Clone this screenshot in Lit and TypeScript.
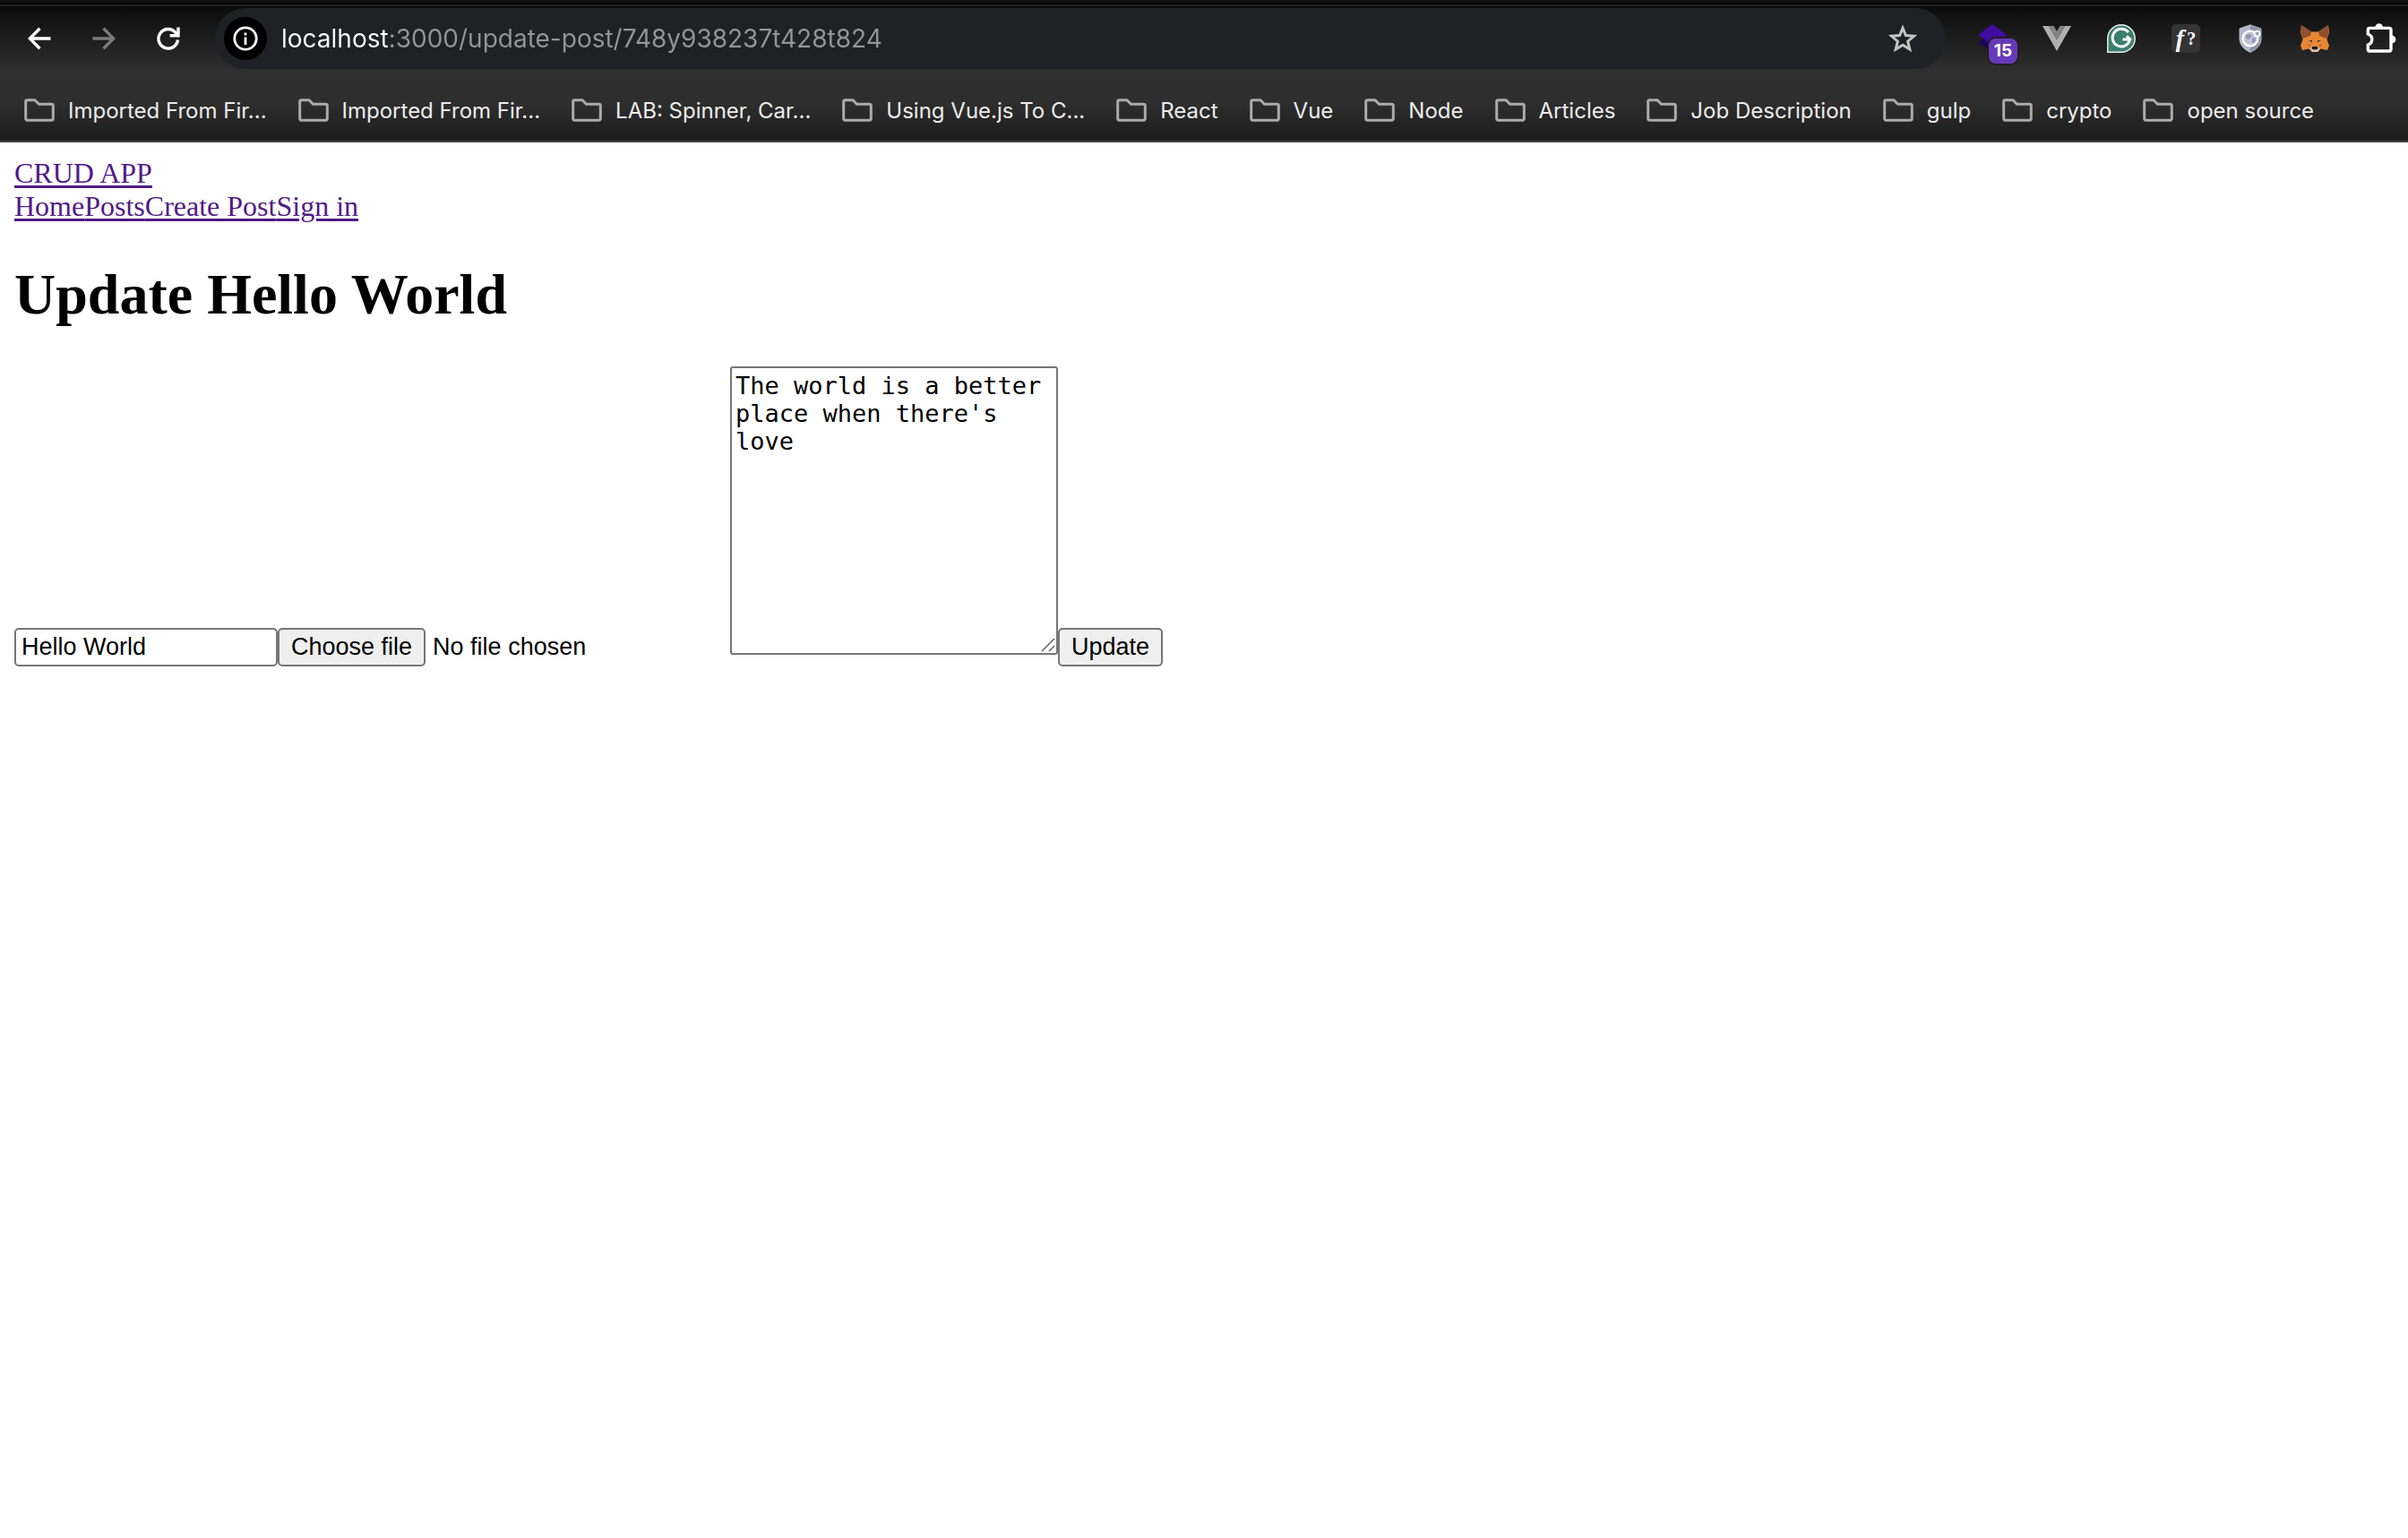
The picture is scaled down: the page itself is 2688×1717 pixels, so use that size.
import { LitElement, html, css } from "lit";
import { customElement, property, state } from "lit/decorators.js";

const BOOKMARKS = [
  "Imported From Fir...",
  "Imported From Fir...",
  "LAB: Spinner, Car...",
  "Using Vue.js To C...",
  "React",
  "Vue",
  "Node",
  "Articles",
  "Job Description",
  "gulp",
  "crypto",
  "open source",
];

const backIcon = html`<svg width="26" height="26" viewBox="0 0 26 26" fill="none" stroke="currentColor" stroke-width="3.4">
  <path d="M25.5 13H3M13.5 1.8L2.3 13l11.2 11.2" />
</svg>`;

const forwardIcon = html`<svg width="26" height="26" viewBox="0 0 26 26" fill="none" stroke="currentColor" stroke-width="3.4">
  <path d="M0.5 13H23M12.5 1.8L23.7 13 12.5 24.2" />
</svg>`;

const reloadIcon = html`<svg width="26" height="26" viewBox="0 0 26 26" fill="none" stroke="currentColor" stroke-width="3.4">
  <path d="M23.5 14.5A10.8 10.8 0 1 1 20.6 5.8L23.6 9" />
  <path d="M24 0.5V9.8H14.6" />
</svg>`;

const infoIcon = html`<svg width="28" height="28" viewBox="0 0 28 28" fill="none" stroke="#fff">
  <circle cx="14" cy="14" r="12.2" stroke-width="2.8" />
  <path d="M14 12.5V21M14 7.5v3" stroke-width="2.8" />
</svg>`;

const starIcon = html`<svg width="34" height="32" viewBox="0 0 34 32" fill="none" stroke="#c4c4c4" stroke-width="3">
  <path d="M17 4.2L20.4 12.6 29.5 13.3 22.6 19.2 24.8 28 17 23.2 9.2 28 11.4 19.2 4.5 13.3 13.6 12.6Z" />
</svg>`;

const folderIcon = html`<svg width="34" height="26" viewBox="0 0 34 26" fill="none" stroke="#ababab" stroke-width="3">
  <path d="M3.5 1.8H12L16.5 6.2H30.5Q32.3 6.2 32.3 8V22.3Q32.3 24.2 30.5 24.2H3.5Q1.7 24.2 1.7 22.3V3.6Q1.7 1.8 3.5 1.8Z" />
</svg>`;

const layersIcon = html`<svg width="32" height="32" viewBox="0 0 32 32">
  <path d="M0 20.5L16 10 32 20.5 16 30Z" fill="#1d0361" />
  <path d="M0 12L16 0 32 12 16 23Z" fill="#3f0ca0" />
</svg>`;

const vueIcon = html`<svg width="32" height="32" viewBox="0 0 32 32">
  <path d="M0 2H7L16 17.5 25 2H32L16 30Z" fill="#b0b0b0" />
  <path d="M7 2H12.5L16 8 19.5 2H25L16 17.5Z" fill="#848484" />
</svg>`;

const grammarIcon = html`<svg width="32" height="32" viewBox="0 0 32 32" fill="none">
  <path d="M0.8 31.2V16A15.2 15.2 0 1 1 16 31.2Z" fill="#3b7f6f" stroke="#e5eeeb" stroke-width="1.5" />
  <path d="M23.8 9.2A9.8 9.8 0 1 0 25.6 17H17.5M22 13.2L25.8 17 23.4 21.5" stroke="#fff" stroke-width="3" />
</svg>`;

const shieldIcon = html`<svg width="32" height="32" viewBox="0 0 32 32" fill="none">
  <path d="M16 0.8L28 5V17Q27.5 26.5 16 31.4 4.5 26.5 4 17V5Z" fill="#8b93a6" stroke="#aab1c2" />
  <path d="M16 0.8L4 5V17Q4.5 26.5 16 31.4Z" fill="#b3b9ca" />
  <circle cx="16" cy="16" r="8.4" fill="#bcc4d6" stroke="#fff" stroke-width="2.4" />
  <path d="M11 12L16 11 17.5 14 14 17 11 16ZM18 16L22 15 21 20 18 21Z" fill="#8c97ad" />
  <circle cx="23.7" cy="10.6" r="3" fill="#9fa8bb" stroke="#fff" stroke-width="1.8" />
</svg>`;

const foxIcon = html`<svg width="32" height="32" viewBox="0 0 32 32">
  <path d="M1 1L12 8.5H20L31 1 32 9 29.5 17 32 24 30 29 22.5 27.5 19 31H13L9.5 27.5 2 29 0 24 2.5 17 0 9Z" fill="#e88735" />
  <path d="M1 1L12 8.5 11 13 2.5 16 1.5 13 0.5 9ZM31 1L20 8.5 21 13 29.5 16 30.5 13 31.5 9Z" fill="#8d512e" />
  <path d="M7 23L12 21.5 10.5 25.5ZM25 23L20 21.5 21.5 25.5Z" fill="#cf6b2e" />
  <path d="M9 18L12.8 18 13.2 20.6ZM23 18L19.2 18 18.8 20.6Z" fill="#343a44" />
  <path d="M10 27L13 25.5H19L22 27 19 31H13Z" fill="#cfc3b6" />
  <path d="M13 25H19L19.3 27.8 16 28.6 12.7 27.8Z" fill="#181818" />
</svg>`;

const puzzleIcon = html`<svg width="36" height="36" viewBox="0 0 36 36" fill="none" stroke="#fff" stroke-width="3.4">
  <path d="M5 6.4H27Q29 6.4 29 8.4V30Q29 32 27 32H5Q3.3 32 3.3 30V25.2A6.4 6.4 0 0 0 3.3 13V8.4Q3.3 6.4 5 6.4Z" />
  <path d="M11.3 5.6a4.4 4.4 0 0 1 8.8 0zM30 14.6a4.4 4.4 0 0 1 0 8.8z" fill="#fff" stroke="none" />
</svg>`;

@customElement("browser-chrome")
class BrowserChrome extends LitElement {
  @property() url = "";

  static styles = css`
    :host {
      display: block;
      font-family: Inter, "Liberation Sans", sans-serif;
      color: #ececec;
      border-bottom: 2px solid #434343;
      background: linear-gradient(
        #121212 0 3px, #000 3px 5px, #222 5px 7px, #0a0a0a 7px,
        #181818 32px, #303030 82px, #2e2e2e 115px, #1c1c1c 157px
      );
    }
    .toolbar {
      display: flex;
      align-items: center;
      padding: 9px 12px 0 24px;
    }
    .nav {
      display: flex;
      gap: 32px;
      margin-right: 32px;
    }
    button {
      border: 0;
      padding: 0;
      background: none;
      color: inherit;
      font: inherit;
      display: flex;
      align-items: center;
      justify-content: center;
    }
    svg {
      display: block;
      flex: none;
    }
    .nav button {
      width: 40px;
      height: 40px;
      color: #fff;
    }
    .nav button:disabled {
      color: #7a7a7a;
    }
    .address {
      flex: 1;
      height: 68px;
      box-sizing: border-box;
      border-radius: 34px;
      background: #202125;
      display: flex;
      align-items: center;
      gap: 16px;
      padding: 0 31px 0 10px;
    }
    .info {
      width: 48px;
      height: 48px;
      border-radius: 24px;
      background: #000;
    }
    .url {
      flex: 1;
      min-width: 0;
      border: 0;
      padding: 0;
      outline: 0;
      height: 40px;
      font: 400 28px/40px Inter, "Liberation Sans", sans-serif;
      color: transparent;
      background: linear-gradient(90deg, #fff 120px, #959597 120px);
      -webkit-background-clip: text;
      background-clip: text;
    }
    .extensions {
      display: flex;
      align-items: center;
      gap: 40px;
      margin-left: 36px;
    }
    .extensions button {
      position: relative;
    }
    .badge {
      position: absolute;
      left: 12px;
      top: 16px;
      width: 32px;
      height: 28px;
      border-radius: 8px;
      background: #673ab7;
      box-shadow: 0 0 0 2px #202020;
      color: #fff;
      font: 700 19px/28px Inter, sans-serif;
      text-align: center;
    }
    .formula {
      width: 32px;
      height: 32px;
      gap: 3px;
      border-radius: 5px;
      background: #343434;
      color: #fff;
      font: italic 700 28px/30px "Liberation Serif", serif;
    }
    .formula .mark {
      font: 700 20px/30px "Liberation Serif", serif;
    }
    .bookmarks {
      display: flex;
      gap: 35px;
      padding: 12px 27px 0;
      overflow: hidden;
    }
    .bookmark {
      height: 68px;
      gap: 15px;
      font-size: 24px;
      font-weight: 400;
      white-space: nowrap;
    }
  `;

  render() {
    return html`
      <div class="toolbar">
        <div class="nav">
          <button aria-label="Back">${backIcon}</button>
          <button aria-label="Forward" disabled>${forwardIcon}</button>
          <button aria-label="Reload">${reloadIcon}</button>
        </div>
        <div class="address">
          <button class="info" aria-label="Site information">${infoIcon}</button>
          <input class="url" type="text" aria-label="Address" spellcheck="false" .value=${this.url} />
          <button aria-label="Bookmark this page">${starIcon}</button>
        </div>
        <div class="extensions">
          <button aria-label="Layers">${layersIcon}<span class="badge">15</span></button>
          <button aria-label="Vue devtools">${vueIcon}</button>
          <button aria-label="Grammar">${grammarIcon}</button>
          <button aria-label="Font finder" class="formula">f<span class="mark">?</span></button>
          <button aria-label="Shield">${shieldIcon}</button>
          <button aria-label="Wallet">${foxIcon}</button>
          <button aria-label="Extensions">${puzzleIcon}</button>
        </div>
      </div>
      <div class="bookmarks">
        ${BOOKMARKS.map((name) => html`<button class="bookmark">${folderIcon}<span>${name}</span></button>`)}
      </div>
    `;
  }
}

@customElement("update-post")
class UpdatePost extends LitElement {
  @state() fileName = "No file chosen";

  static styles = css`
    :host {
      display: block;
      padding: 16px;
      font: 32px/37px "Liberation Serif", serif;
      color: #000;
    }
    a {
      color: #501b87;
      text-decoration: underline;
      text-decoration-thickness: 3px;
      text-underline-offset: 3px;
    }
    .links {
      display: flex;
    }
    h1 {
      margin: 43px 0;
      font-size: 64px;
      line-height: 74px;
      font-weight: 700;
    }
    form {
      display: flex;
      align-items: flex-end;
      font: 27px/31px "Liberation Sans", sans-serif;
    }
    .title,
    .button,
    textarea {
      box-sizing: border-box;
      border: 2px solid #767676;
      border-radius: 5px;
      color: #000;
      font: inherit;
      margin: 0;
    }
    .title {
      width: 294px;
      height: 43px;
      padding: 2px 6px;
      background: #fff;
    }
    .button {
      height: 43px;
      padding: 4px 13px;
      background: #efefef;
      white-space: nowrap;
    }
    .file {
      position: relative;
      display: flex;
      align-items: center;
      gap: 8px;
      width: 505px;
    }
    .file input {
      position: absolute;
      inset: 0;
      width: 100%;
      opacity: 0;
    }
    .body {
      position: relative;
      display: flex;
      margin-bottom: 13px;
    }
    textarea {
      width: 366px;
      height: 322px;
      padding: 4px;
      border-radius: 3px;
      background: #fff;
      font: 27px/31px "DejaVu Sans Mono", monospace;
      resize: none;
    }
    .grip {
      position: absolute;
      right: 3px;
      bottom: 3px;
    }
  `;

  private pick(e: Event) {
    const input = e.target as HTMLInputElement;
    this.fileName = input.files?.[0]?.name ?? "No file chosen";
  }

  render() {
    return html`
      <nav>
        <a href="/">CRUD APP</a>
        <div class="links">
          <a href="/">Home</a><a href="/posts">Posts</a><a href="/create-post">Create Post</a><a href="/sign-in">Sign in</a>
        </div>
      </nav>
      <h1>Update Hello World</h1>
      <form @submit=${(e: Event) => e.preventDefault()}>
        <input class="title" type="text" aria-label="Title" value="Hello World" />
        <div class="file">
          <label class="button" for="image">Choose file</label>
          <span>${this.fileName}</span>
          <input id="image" type="file" @change=${this.pick} />
        </div>
        <div class="body">
          <textarea aria-label="Body" spellcheck="false" .value=${"The world is a better place when there's love"}></textarea>
          <svg class="grip" width="16" height="16" viewBox="0 0 16 16" stroke="#555" stroke-width="1.4">
            <path d="M1 15L15 1M9 15L15 9" />
          </svg>
        </div>
        <button class="button" type="submit">Update</button>
      </form>
    `;
  }
}

@customElement("app-root")
class AppRoot extends LitElement {
  static styles = css`
    :host {
      display: block;
      min-height: 100vh;
      background: #fff;
    }
  `;

  render() {
    return html`
      <browser-chrome url="localhost:3000/update-post/748y938237t428t824"></browser-chrome>
      <update-post></update-post>
    `;
  }
}
